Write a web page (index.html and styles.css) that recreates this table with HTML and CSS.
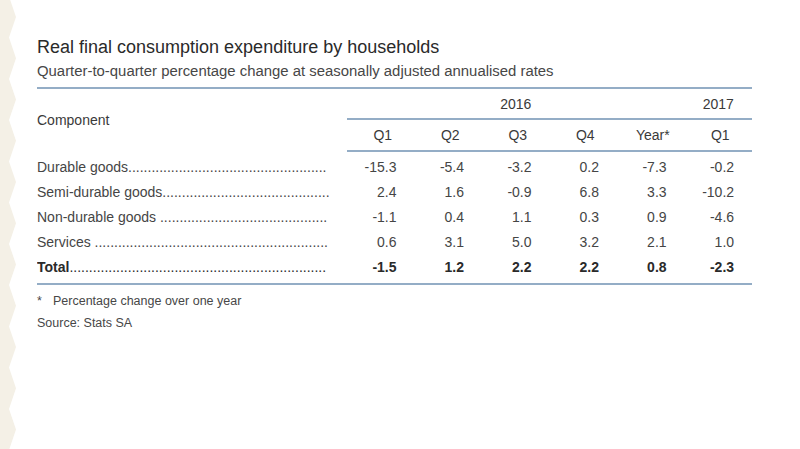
FILE: index.html
```html
<!DOCTYPE html>
<html lang="en">
<head>
<meta charset="utf-8">
<title>Real final consumption expenditure by households</title>
<link rel="stylesheet" href="styles.css">
</head>
<body>
<div class="edge">
  <svg width="17" height="449" viewBox="0 0 17 449" aria-hidden="true">
    <path fill="#f4f0e6" d="M0,-4 L9,-3.6 L16,17 L9,37.6 L16,58.3 L9,78.9 L16,99.5 L9,120.1 L16,140.8 L9,161.4 L16,182 L9,202.6 L16,223.3 L9,243.9 L16,264.5 L9,285.1 L16,305.8 L9,326.4 L16,347 L9,367.6 L16,388.3 L9,408.9 L16,429.5 L9,450.1 L0,451 Z"/>
  </svg>
</div>
<main class="main">
  <h1 class="title">Real final consumption expenditure by households</h1>
  <p class="subtitle">Quarter-to-quarter percentage change at seasonally adjusted annualised rates</p>
  <table class="data">
    <colgroup>
      <col class="c-label"><col class="c-num"><col class="c-num"><col class="c-num"><col class="c-num"><col class="c-num"><col class="c-num">
    </colgroup>
    <thead>
      <tr class="h1">
        <th class="comp" rowspan="2">Component</th>
        <th class="yr" colspan="5">2016</th>
        <th class="yr">2017</th>
      </tr>
      <tr class="h2">
        <th>Q1</th><th>Q2</th><th>Q3</th><th>Q4</th><th>Year*</th><th>Q1</th>
      </tr>
    </thead>
    <tbody>
      <tr class="first">
        <td class="lbl">Durable goods...................................................</td>
        <td>-15.3</td><td>-5.4</td><td>-3.2</td><td>0.2</td><td>-7.3</td><td>-0.2</td>
      </tr>
      <tr>
        <td class="lbl">Semi-durable goods...........................................</td>
        <td>2.4</td><td>1.6</td><td>-0.9</td><td>6.8</td><td>3.3</td><td>-10.2</td>
      </tr>
      <tr>
        <td class="lbl">Non-durable goods ...........................................</td>
        <td>-1.1</td><td>0.4</td><td>1.1</td><td>0.3</td><td>0.9</td><td>-4.6</td>
      </tr>
      <tr>
        <td class="lbl">Services ............................................................</td>
        <td>0.6</td><td>3.1</td><td>5.0</td><td>3.2</td><td>2.1</td><td>1.0</td>
      </tr>
      <tr class="total">
        <td class="lbl"><b>Total</b>..................................................................</td>
        <td>-1.5</td><td>1.2</td><td>2.2</td><td>2.2</td><td>0.8</td><td>-2.3</td>
      </tr>
    </tbody>
  </table>
  <div class="notes">
    <p class="note"><span class="star">*</span>Percentage change over one year</p>
    <p class="note">Source: Stats SA</p>
  </div>
</main>
</body>
</html>
```
FILE: styles.css
```css
html, body {
  margin: 0;
  padding: 0;
  background: #ffffff;
}
body {
  display: flex;
  height: 449px;
  overflow: hidden;
  font-family: "Liberation Sans", Arial, Helvetica, sans-serif;
  color: #454545;
}
.edge {
  flex: 0 0 17px;
  height: 449px;
}
.edge svg {
  display: block;
}
.main {
  padding: 36px 0 0 20px;
  width: 715px;
}
.title {
  margin: 0;
  font-size: 18px;
  line-height: 22px;
  font-weight: normal;
  color: #2a2a2a;
}
.subtitle {
  margin: 4px 0 0 0;
  font-size: 14.9px;
  line-height: 18px;
  color: #474747;
  padding-bottom: 7px;
  border-bottom: 2px solid #94adc6;
}
.data {
  width: 715px;
  border-collapse: collapse;
  table-layout: fixed;
  font-size: 14px;
}
.c-label { width: 310px; }
.c-num { width: 67.5px; }
.data th {
  font-weight: normal;
  color: #3a3a3a;
  padding: 0;
}
.h1 th {
  height: 29px;
}
.h2 th {
  height: 30px;
  text-align: center;
  border-bottom: 2px solid #94adc6;
  padding-left: 4px;
}
.yr {
  text-align: center;
  border-bottom: 2px solid #94adc6;
}
.comp {
  text-align: left;
  vertical-align: middle;
}
.data td {
  height: 25px;
  padding: 0 18px 0 0;
  text-align: right;
  line-height: 25px;
  white-space: nowrap;
  overflow: hidden;
}
.data td.lbl {
  text-align: left;
  padding-right: 20px;
}
.first td {
  padding-top: 3px;
}
.total td {
  font-weight: bold;
  color: #2a2a2a;
  padding-bottom: 3px;
  border-bottom: 2px solid #94adc6;
}
.total td.lbl {
  font-weight: normal;
}
.notes {
  padding-top: 5px;
}
.note {
  margin: 0;
  font-size: 12.5px;
  line-height: 22px;
  color: #474747;
}
.star {
  display: inline-block;
  width: 16px;
}
```
